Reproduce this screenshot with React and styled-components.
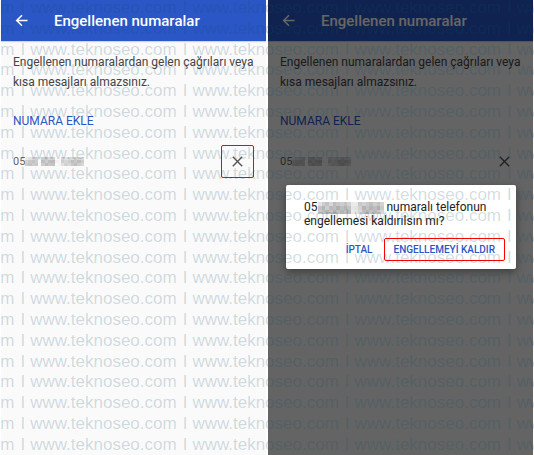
import React from "react";
import styled, { createGlobalStyle } from 'styled-components'

const GlobalStyle = createGlobalStyle`
    * {
        box-sizing: border-box;
    }
    body {
        margin: 0;
        background: white;
        font-family: Roboto, sans-serif;
    }
    button {
        margin: 0;
        padding: 0;
        border: none;
        background: transparent;
        font-family: inherit;
        cursor: pointer;
    }
`

const Page = styled.div`
    position: relative;
    display: grid;
    grid-template-columns: 1fr 1fr;
    gap: 2px;
    min-height: 100vh;
    padding: 0 1px;
    overflow: hidden;
`

const Screen = styled.section`
    position: relative;
    background: #fafafa;
`

const Header = styled.header`
    display: flex;
    align-items: center;
    gap: 25px;
    height: 41px;
    padding: 0 13px;
    background: #2a56c6;
    color: white;
    box-shadow: 0 1px 1px rgba(0, 0, 0, .15);
`

const BackButton = styled.button`
    display: flex;
    color: inherit;
`

const Title = styled.h1`
    margin: 0;
    font-size: 15px;
    line-height: 20px;
    font-weight: 500;
`

const Content = styled.div`
    padding: 11px 12px;
`

const Description = styled.p`
    margin: 0;
    font-size: 12px;
    line-height: 20px;
    color: #444;
`

const AddButton = styled.button`
    display: block;
    margin-top: 19px;
    font-size: 12px;
    line-height: 20px;
    color: #2a56c6;
`

const NumberRow = styled.div`
    display: flex;
    align-items: center;
    justify-content: space-between;
    margin-top: 14px;
    font-size: 11px;
    color: #666;
`

const BlockedNumber = styled.span`
    display: flex;
    align-items: center;
`

const RemoveButton = styled.button`
    display: flex;
    align-items: center;
    justify-content: center;
    width: 33px;
    height: 33px;
    border: 1px solid;
    border-color: ${props => props.$marked ? '#ff0000' : 'transparent'};
    border-radius: 2px;
    color: #555;
`

const Scrim = styled.div`
    position: absolute;
    inset: 0;
    padding: 185px 17px 0 18px;
    background: rgba(0, 0, 0, .6);
`

const Dialog = styled.div`
    padding: 15px 11px 8px 18px;
    border-radius: 2px;
    background: white;
    box-shadow: 0 3px 8px rgba(0, 0, 0, .4);
`

const Message = styled.p`
    margin: 0;
    font-size: 12px;
    line-height: 14px;
    color: #222;

    svg {
        vertical-align: bottom;
    }
`

const Actions = styled.div`
    display: flex;
    justify-content: flex-end;
    gap: 1px;
    margin-top: 10px;
`

const ActionButton = styled.button`
    height: 23px;
    padding: 0 9px;
    border: 1px solid ${props => props.$marked ? '#ff0000' : 'transparent'};
    border-radius: 2px;
    font-size: 10px;
    font-weight: 500;
    color: #2a56c6;
`

const Watermark = styled.div`
    position: absolute;
    inset: -2px 0 1px;
    display: flex;
    flex-direction: column;
    justify-content: space-between;
    overflow: hidden;
    pointer-events: none;
    font-family: "Liberation Sans", sans-serif;
    font-size: 17px;
    line-height: 19px;
    color: rgba(15, 80, 105, .2);
`

const WatermarkRow = styled.div`
    display: flex;
    margin-left: -132px;
    white-space: nowrap;
`

const Divider = styled.span`
    margin: 0 5px 0 6px;
`

const BackIcon = () => (
    <svg width="15" height="15" viewBox="0 0 15 15" fill="none" stroke="currentColor" strokeWidth="1.5">
        <path d="M13.5 7.5H3M8 2.2L2.7 7.5L8 12.8" />
    </svg>
)

const CloseIcon = () => (
    <svg width="11" height="11" viewBox="0 0 11 11" fill="none" stroke="currentColor" strokeWidth="1.4">
        <path d="M.8 .8L10.2 10.2M10.2 .8L.8 10.2" />
    </svg>
)

// grey levels of the censored digits, one row of blocks per array
const rowShades = [
    [235, 225, 215, 205, 240, 205, 200, 215, 210, 250, 250, 215, 225, 215, 220, 205, 215, 220],
    [210, 200, 195, 205, 250, 190, 205, 190, 185, 240, 245, 205, 215, 205, 190, 200, 190, 205],
    [205, 195, 205, 200, 250, 205, 190, 200, 195, 250, 245, 225, 210, 215, 200, 190, 205, 215]
]

const dialogShades = [
    [225, 205, 195, 215, 190, 200, 205, 195, 210, 235, 235, 200, 210, 200, 190, 205, 195, 210],
    [195, 180, 205, 185, 190, 175, 190, 180, 195, 230, 225, 210, 180, 195, 180, 190, 175, 200],
    [200, 190, 180, 195, 175, 190, 180, 190, 185, 235, 230, 215, 190, 180, 195, 185, 200, 215]
]

const Mosaic = ({ width, height, shades }) => (
    <svg width={width} height={height} viewBox="0 0 18 3" preserveAspectRatio="none" shapeRendering="crispEdges">
        {shades.map((row, y) => row.map((shade, x) => (
            <rect key={`${x}-${y}`} x={x} y={y} width="1" height="1" fill={`rgb(${shade}, ${shade}, ${shade})`} />
        )))}
    </svg>
)

const BlockedNumbers = ({ marked, children }) => (
    <Screen>
        <Header>
            <BackButton aria-label="Geri"><BackIcon /></BackButton>
            <Title>Engellenen numaralar</Title>
        </Header>
        <Content>
            <Description>Engellenen numaralardan gelen çağrıları veya kısa mesajları almazsınız.</Description>
            <AddButton>NUMARA EKLE</AddButton>
            <NumberRow>
                <BlockedNumber>05<Mosaic width={59} height={9} shades={rowShades} /></BlockedNumber>
                <RemoveButton $marked={marked} aria-label="Kaldır"><CloseIcon /></RemoveButton>
            </NumberRow>
        </Content>
        {children}
    </Screen>
)

const App = () => (
    <>
        <GlobalStyle />
        <Page>
            <BlockedNumbers marked />
            <BlockedNumbers>
                <Scrim>
                    <Dialog role="dialog" aria-modal="true">
                        <Message>
                            05<Mosaic width={66} height={12} shades={dialogShades} /> numaralı telefonun engellemesi kaldırılsın mı?
                        </Message>
                        <Actions>
                            <ActionButton>İPTAL</ActionButton>
                            <ActionButton $marked>ENGELLEMEYİ KALDIR</ActionButton>
                        </Actions>
                    </Dialog>
                </Scrim>
            </BlockedNumbers>
            <Watermark aria-hidden="true">
                {Array.from({ length: 22 }, (_, row) => (
                    <WatermarkRow key={row}>
                        {Array.from({ length: 5 }, (_, i) => (
                            <React.Fragment key={i}>
                                <span>www.teknoseo.com</span>
                                <Divider>I</Divider>
                            </React.Fragment>
                        ))}
                    </WatermarkRow>
                ))}
            </Watermark>
        </Page>
    </>
)

export default App
